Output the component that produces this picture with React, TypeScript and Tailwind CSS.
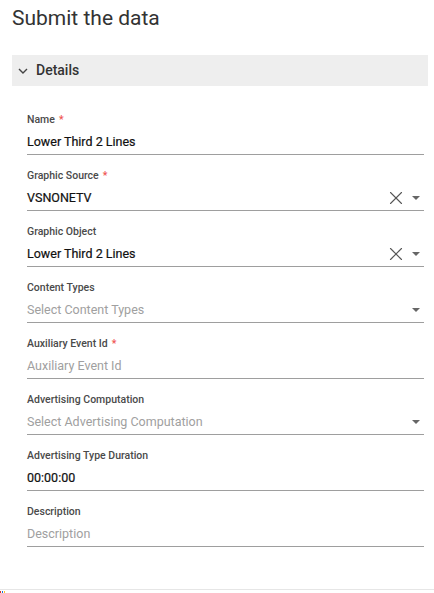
import { X } from "lucide-react";

type Field = {
  label: string;
  required?: boolean;
  value?: string;
  placeholder?: string;
  clear?: boolean;
  select?: boolean;
};

const fields: Field[] = [
  { label: "Name", required: true, value: "Lower Third 2 Lines" },
  { label: "Graphic Source", required: true, value: "VSNONETV", clear: true, select: true },
  { label: "Graphic Object", value: "Lower Third 2 Lines", clear: true, select: true },
  { label: "Content Types", placeholder: "Select Content Types", select: true },
  { label: "Auxiliary Event Id", required: true, placeholder: "Auxiliary Event Id" },
  { label: "Advertising Computation", placeholder: "Select Advertising Computation", select: true },
  { label: "Advertising Type Duration", value: "00:00:00" },
  { label: "Description", placeholder: "Description" },
];

function Caret() {
  return (
    <svg width="8" height="4" viewBox="0 0 8 4" className="text-[#666]">
      <path d="M0 0 L8 0 L4 4 Z" fill="currentColor" />
    </svg>
  );
}

function FormField({ f }: { f: Field }) {
  return (
    <div className="h-[56px] flex flex-col">
      <div className="text-[10.5px] font-medium text-[#4a4a4a] leading-[14px] mt-[5px]">
        {f.label}
        {f.required && <span className="text-[#ef5350] ml-[4px]">*</span>}
      </div>
      <div className="flex items-center h-[25px] mt-[3px] border-b border-[#9e9e9e]">
        <span
          className={
            f.value
              ? "flex-1 text-[12.5px] text-[#111] leading-[18px] [-webkit-text-stroke:0.2px_#111]"
              : "flex-1 text-[12.5px] text-[#a0a0a0] leading-[18px]"
          }
        >
          {f.value ?? f.placeholder}
        </span>
        {f.clear && <X size={22} strokeWidth={1.2} className="text-[#555] mr-[5px]" />}
        {f.select && (
          <span className="mr-[4px] flex">
            <Caret />
          </span>
        )}
      </div>
    </div>
  );
}

export default function App() {
  return (
    <main className="w-[434px] h-[593px] overflow-hidden bg-white relative font-['Roboto',sans-serif]">
      <h1 className="text-[21px] text-[#333] leading-none pl-[12px] pt-[8px]">Submit the data</h1>

      <section className="ml-[12px] mr-[6px] mt-[26px]">
        <div className="h-[31px] bg-[#eeeeee] flex items-center pl-[6px] gap-[8px]">
          <svg width="10" height="6" viewBox="0 0 10 6" className="text-[#444]">
            <path d="M1 1 L5 5 L9 1" fill="none" stroke="currentColor" strokeWidth="1.4" />
          </svg>
          <span className="text-[14px] font-medium text-[#333]">Details</span>
        </div>

        <div className="pl-[15px] pr-[4px] pt-[22px]">
          {fields.map((f) => (
            <FormField key={f.label} f={f} />
          ))}
        </div>
      </section>

      <div className="absolute left-0 right-0 bottom-0 h-[4px] border-t border-[#e6e6e6] bg-white">
        <div className="flex gap-[1px] pt-[1px]">
          <span className="w-[1px] h-[2px] bg-[#d32f2f]" />
          <span className="w-[1px] h-[2px] bg-[#1976d2]" />
          <span className="w-[1px] h-[2px] bg-[#fbc02d]" />
        </div>
      </div>
    </main>
  );
}
